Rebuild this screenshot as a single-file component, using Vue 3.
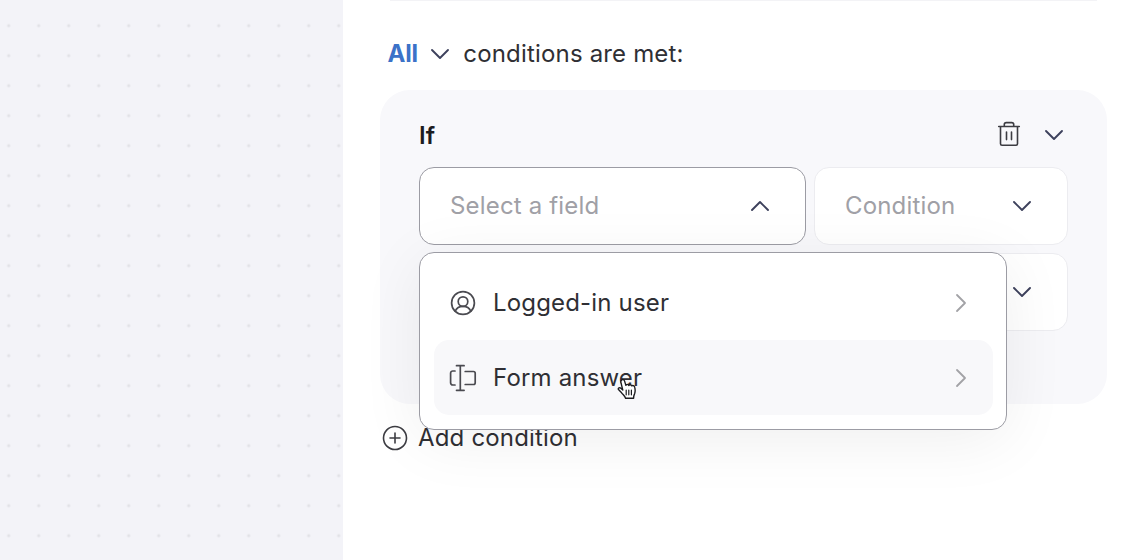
<script setup>
import { ref } from 'vue';

const isFieldOpen = ref(true);
const matchMode = ref('All');
const active = ref('form');

const sources = [
  { id: 'user', label: 'Logged-in user' },
  { id: 'form', label: 'Form answer' },
];

const toggleField = () => {
  isFieldOpen.value = !isFieldOpen.value;
};

const toggleMode = () => {
  matchMode.value = matchMode.value === 'All' ? 'Any' : 'All';
};
</script>

<template>
  <div class="builder">
    <div class="canvas"></div>

    <main class="panel">
      <div class="summary">
        <button class="mode" @click="toggleMode">
          <span class="mode-label">{{ matchMode }}</span>
          <svg class="chevron" viewBox="0 0 20 12"><path d="M2 2l8 8 8-8" /></svg>
        </button>
        <span class="summary-text">conditions are met:</span>
      </div>

      <section class="card">
        <header class="card-head">
          <h3>If</h3>
          <div class="actions">
            <svg class="trash" viewBox="0 0 24 28">
              <path d="M1.7 6.5h20.6M3.5 6.5v17.2a1.5 1.5 0 0 0 1.5 1.5h14a1.5 1.5 0 0 0 1.5-1.5V6.5M7.3 6.5V4.6a2 2 0 0 1 2-2h5.4a2 2 0 0 1 2 2v1.9M9.5 12v7.6M14.5 12v7.6" />
            </svg>
            <svg class="chevron" viewBox="0 0 20 12"><path d="M2 2l8 8 8-8" /></svg>
          </div>
        </header>

        <div class="row">
          <div class="field">
            <button class="select open" @click="toggleField">
              <span>Select a field</span>
              <svg class="chevron" viewBox="0 0 20 12"><path d="M2 10l8-8 8 8" /></svg>
            </button>

            <div v-if="isFieldOpen" class="menu">
              <div
                v-for="source in sources"
                :key="source.id"
                class="option"
                :class="{ active: active === source.id }"
                @mouseenter="active = source.id"
              >
                <svg v-if="source.id === 'user'" class="option-icon" viewBox="0 0 28 28">
                  <circle cx="14" cy="14" r="11.4" />
                  <circle cx="14" cy="12.6" r="4.8" />
                  <path d="M6.2 22.2c1.3-3 4.2-4.8 7.8-4.8s6.5 1.8 7.8 4.8" />
                </svg>
                <svg v-else class="option-icon" viewBox="0 0 28 28">
                  <path d="M7.5 1.7h7.6M7.500 26.3h7.6M11.3 1.7v24.6M6 7H3.8a2.2 2.2 0 0 0-2.2 2.200v9.600A2.200 2.200 0 0 0 3.800 21H6M16.200 7.500h8.300a1.700 1.700 0 0 1 1.700 1.700v9.600a1.700 1.700 0 0 1-1.700 1.700h-8.300" />
                </svg>
                <span class="option-label">{{ source.label }}</span>
                <svg class="arrow" viewBox="0 0 12 20"><path d="M2 2l8 8-8 8" /></svg>
              </div>

              <svg class="cursor" viewBox="0 0 20 22">
                <path d="M4.600 2.100C5.700 1 7.100 1.700 7.500 2.900l1.400 4.500c.2-1.300 2.300-1.400 2.900.1.500-1.200 2.500-1 2.900.4 1-.8 2.700-.1 3 1.300.5 2 .7 4.400-.1 6.500-.5 1.200-1 2-1 4.500h-8c-.6-2.100-2.700-3.600-4-5.400L1.500 11.600c-.8-1.500 1.100-2.500 2.400-1.300l1.900 1.800-1.900-7.800c-.2-.8.100-1.700.7-2.200z" />
                <path class="fingers" d="M9.200 12v4.800M11.800 12v4.800M14.400 12v4.800" />
              </svg>
            </div>
          </div>

          <button class="select condition">
            <span>Condition</span>
            <svg class="chevron" viewBox="0 0 20 12"><path d="M2 2l8 8 8-8" /></svg>
          </button>
        </div>

        <button class="select value">
          <span></span>
          <svg class="chevron" viewBox="0 0 20 12"><path d="M2 2l8 8 8-8" /></svg>
        </button>
      </section>

      <button class="add">
        <svg class="plus" viewBox="0 0 26 26">
          <circle cx="13" cy="13" r="11.5" />
          <path d="M13 8v10M8 13h10" />
        </svg>
        <span>Add condition</span>
      </button>
    </main>
  </div>
</template>

<style>
body {
  margin: 0;
  overflow: hidden;
}
</style>

<style scoped>
.builder {
  display: flex;
  height: 560px;
  overflow: hidden;
  font-family: Inter, "Liberation Sans", sans-serif;
  font-size: 24px;
  line-height: 30px;
  letter-spacing: 0.17px;
  color: #2f2f34;
  background: #fff;
}

.builder *,
.builder *::before {
  box-sizing: border-box;
}

button {
  padding: 0;
  border: none;
  background: none;
  font: inherit;
  color: inherit;
  letter-spacing: inherit;
  cursor: pointer;
}

svg {
  display: block;
  flex: none;
  fill: none;
  stroke-linecap: round;
  stroke-linejoin: round;
}

/* Dotted canvas */
.canvas {
  flex: none;
  width: 342.5px;
  background-color: #f3f3f8;
  background-image: radial-gradient(circle, #e2e2e7 1.2px, transparent 1.9px);
  background-size: 30px 30px;
  background-position: -6.3px 10.7px;
}

/* Side panel */
.panel {
  flex: 1;
  padding: 0 23px 0 37.5px;
}

.panel::before {
  content: "";
  display: block;
  height: 1px;
  margin: 0 10px;
  background: #f3f3f6;
}

.summary {
  display: flex;
  align-items: center;
  gap: 13.5px;
  padding: 38px 8px 0 7.5px;
}

.mode {
  display: flex;
  align-items: center;
  gap: 12px;
}

.mode-label {
  font-weight: 700;
  letter-spacing: -0.2px;
  color: #3b72c8;
}

.chevron {
  width: 20px;
  height: 12px;
  stroke: #3d415c;
  stroke-width: 1.9;
}

/* Condition card */
.card {
  height: 314px;
  margin-top: 21px;
  padding: 31px 39px 0;
  border-radius: 30px;
  background: #f8f8fb;
}

.card-head {
  display: flex;
  align-items: center;
  justify-content: space-between;
  height: 28px;
  padding-right: 4px;
}

h3 {
  margin: 2px 0 0;
  font-size: 24px;
  font-weight: 600;
  color: #1c1c1f;
}

.actions {
  display: flex;
  align-items: center;
  gap: 23px;
  padding-bottom: 2px;
}

.actions .chevron {
  margin-top: 1px;
}

.trash {
  width: 24px;
  height: 28px;
  stroke: #3c3c42;
  stroke-width: 1.6;
}

.row {
  display: flex;
  gap: 8px;
  margin-top: 18px;
}

.field {
  position: relative;
  width: 387px;
}

.select {
  display: flex;
  align-items: center;
  justify-content: space-between;
  width: 100%;
  height: 78px;
  padding: 0 35px 0 30px;
  border: 1px solid #ececf0;
  border-radius: 15px;
  background: #fff;
  color: #a0a0a6;
}

.select.open {
  border-color: #9c9ca4;
}

.condition {
  width: 254px;
}

.value {
  margin-top: 8px;
}

/* Dropdown */
.menu {
  position: absolute;
  z-index: 2;
  top: 85px;
  left: 0;
  width: 588px;
  height: 178px;
  padding: 12px 13px 0 14px;
  border: 1px solid #9c9ca4;
  border-radius: 15px;
  background: #fff;
  box-shadow: 0 10px 64px rgba(0, 0, 0, 0.065);
}

.option {
  display: flex;
  align-items: center;
  height: 75px;
  padding: 0 26px 0 15px;
  border-radius: 15px;
}

.option.active {
  background: #f8f8fa;
}

.option-icon {
  width: 28px;
  height: 28px;
  stroke: #4a4a50;
  stroke-width: 1.7;
}

.option-label {
  flex: 1;
  margin-left: 16px;
}

.arrow {
  width: 12px;
  height: 20px;
  stroke: #a2a2a6;
  stroke-width: 1.8;
}

.cursor {
  position: absolute;
  top: 125px;
  left: 197px;
  width: 20px;
  height: 22px;
  fill: #fff;
  stroke: #1c1c1f;
  stroke-width: 1.4;
}

.cursor .fingers {
  stroke-width: 1.2;
}

/* Add button */
.add {
  display: flex;
  align-items: center;
  gap: 10px;
  margin: 19px 0 0 2px;
}

.plus {
  width: 26px;
  height: 26px;
  stroke: #3c3c42;
  stroke-width: 1.6;
}
</style>
